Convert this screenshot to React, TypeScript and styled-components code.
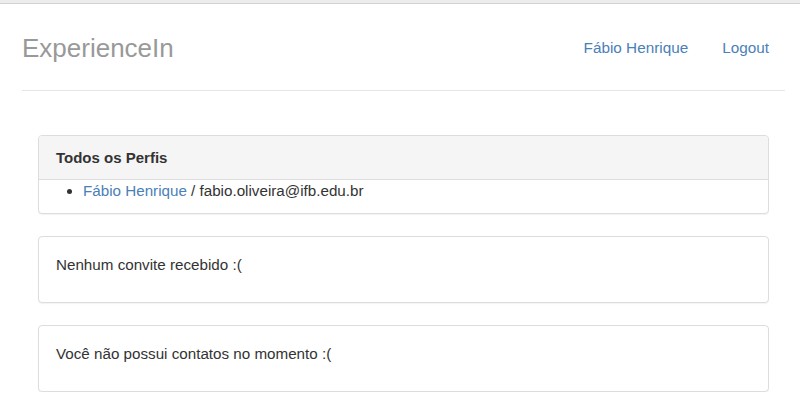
import styled, { createGlobalStyle } from "styled-components";

const GlobalStyle = createGlobalStyle`
  html, body {
    margin: 0;
    padding: 0;
    background: #ffffff;
    font-family: "Liberation Sans", Arial, sans-serif;
    color: #333333;
  }
`;

export default function App() {
  return (
    <>
      <GlobalStyle />
      <TopEdge />
      <Header>
        <Brand>ExperienceIn</Brand>
        <Nav>
          <NavLink href="#">Fábio Henrique</NavLink>
          <NavLink href="#">Logout</NavLink>
        </Nav>
      </Header>
      <Main>
        <Panel>
          <PanelHeading>Todos os Perfis</PanelHeading>
          <ProfileList>
            <li>
              <Link href="#">Fábio Henrique</Link> / fabio.oliveira@ifb.edu.br
            </li>
          </ProfileList>
        </Panel>
        <Panel>
          <PanelBody>Nenhum convite recebido :(</PanelBody>
        </Panel>
        <Panel>
          <PanelBody>Você não possui contatos no momento :(</PanelBody>
        </Panel>
      </Main>
    </>
  );
}

const TopEdge = styled.div`
  height: 3px;
  background: #ececec;
  border-bottom: 1px solid #d2d2d2;
`;

const Header = styled.header`
  display: flex;
  align-items: center;
  justify-content: space-between;
  height: 87px;
  padding-top: 2px;
  margin: 0 15px 0 22px;
  border-bottom: 1px solid #e5e5e5;
  box-sizing: border-box;
`;

const Brand = styled.h3`
  margin: 0;
  font-size: 26px;
  font-weight: 400;
  color: #999999;
`;

const Nav = styled.nav`
  display: flex;
  align-items: center;
  margin-right: 1px;
`;

const Link = styled.a`
  color: #4a80b8;
  text-decoration: none;
`;

const NavLink = styled(Link)`
  font-size: 15.3px;
  line-height: 20px;
  padding: 10px 15px;
  margin-left: 4px;
`;

const Main = styled.main`
  display: flex;
  flex-direction: column;
  gap: 22px;
  padding: 44px 31px 0 38px;
`;

const Panel = styled.section`
  background: #ffffff;
  border: 1px solid #dddddd;
  border-radius: 4px;
  box-shadow: 0 1px 1px rgba(0, 0, 0, 0.05);
  overflow: hidden;
`;

const PanelHeading = styled.div`
  height: 44px;
  padding: 0 17px;
  display: flex;
  align-items: center;
  box-sizing: border-box;
  background: #f5f5f5;
  border-bottom: 1px solid #dddddd;
  font-size: 15px;
  font-weight: 700;
  color: #333333;
`;

const ProfileList = styled.ul`
  margin: 0;
  padding: 1px 0 12px 44px;
  font-size: 15.2px;
  line-height: 20px;
`;

const PanelBody = styled.p`
  margin: 0;
  padding: 18px 17px 27px;
  font-size: 15.2px;
  line-height: 20px;
`;
